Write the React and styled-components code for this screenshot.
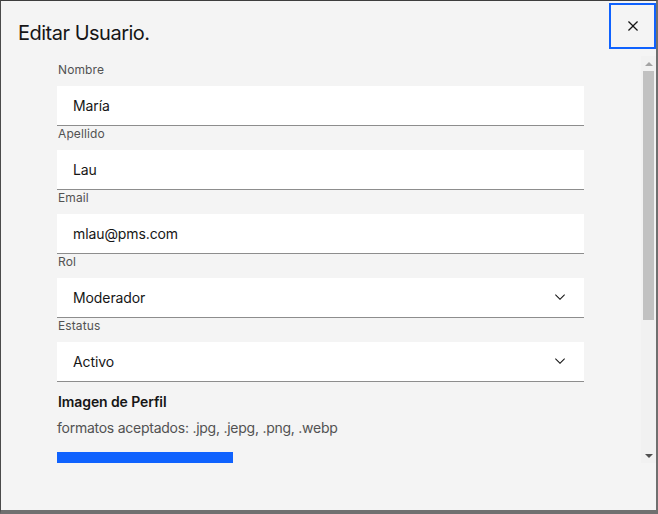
import styled, { createGlobalStyle } from 'styled-components';

const GlobalStyle = createGlobalStyle`
    html, body {
        margin: 0;
        padding: 0;
        background: #3d3d3d;
    }
    * {
        box-sizing: border-box;
    }
`;

const fields = [
    { label: 'Nombre', value: 'María' },
    { label: 'Apellido', value: 'Lau' },
    { label: 'Email', value: 'mlau@pms.com' },
    { label: 'Rol', value: 'Moderador', options: ['Administrador', 'Moderador', 'Usuario'] },
    { label: 'Estatus', value: 'Activo', options: ['Activo', 'Inactivo'] },
];

function ChevronDown() {
    return (
        <svg width="16" height="16" viewBox="0 0 16 16" fill="#161616">
            <path d="M8 11L3 6 3.7 5.3 8 9.6 12.3 5.3 13 6z" />
        </svg>
    );
}

function CloseIcon() {
    return (
        <svg width="20" height="20" viewBox="0 0 32 32" fill="#161616">
            <path d="M17.4141 16L24 9.4141 22.5859 8 16 14.5859 9.4143 8 8 9.4141 14.5859 16 8 22.5859 9.4143 24 16 17.4141 22.5859 24 24 22.5859 17.4141 16z" />
        </svg>
    );
}

function App() {
    return (
        <>
            <GlobalStyle />
            <Modal>
                <Header>
                    <Title>Editar Usuario.</Title>
                    <CloseBt type="button" aria-label="Cerrar">
                        <CloseIcon />
                    </CloseBt>
                </Header>
                <Body>
                    <Content>
                        {fields.map((f) => (
                            <Field key={f.label}>
                                <Label>{f.label}</Label>
                                {f.options ? (
                                    <SelectWrap>
                                        <Select defaultValue={f.value}>
                                            {f.options.map((o) => (
                                                <option key={o}>{o}</option>
                                            ))}
                                        </Select>
                                        <Chevron>
                                            <ChevronDown />
                                        </Chevron>
                                    </SelectWrap>
                                ) : (
                                    <TextInput type="text" defaultValue={f.value} readOnly />
                                )}
                            </Field>
                        ))}
                        <UploadTitle>Imagen de Perfil</UploadTitle>
                        <UploadHint>formatos aceptados: .jpg, .jepg, .png, .webp</UploadHint>
                        {/* boton de subir archivo, queda cortado por el scroll */}
                        <UploadBt type="button" aria-label="Agregar archivo" />
                    </Content>
                    <ScrollBar>
                        <ScrollArrow $up />
                        <ScrollTrack>
                            <ScrollThumb />
                        </ScrollTrack>
                        <ScrollArrow />
                    </ScrollBar>
                </Body>
            </Modal>
        </>
    );
}
export default App;

const Modal = styled.div`
    width: 658px;
    height: 514px;
    background-color: #f4f4f4;
    border-top: 1px solid #3d3d3d;
    border-left: 1px solid #4a4a4a;
    border-right: 2px solid #6f6f6f;
    border-bottom: 4px solid #707070;
    display: flex;
    flex-direction: column;
    font-family: Inter, 'Noto Sans', sans-serif;
    color: #161616;
`;

const Header = styled.div`
    height: 55px;
    display: flex;
    justify-content: space-between;
    align-items: flex-start;
`;

const Title = styled.h2`
    margin: 0;
    padding: 18px 0 0 17px;
    font-size: 20px;
    line-height: 28px;
    font-weight: 400;
    letter-spacing: -0.5px;
`;

const CloseBt = styled.button`
    margin-top: 2px;
    width: 47px;
    height: 46px;
    border: 2px solid #0f62fe;
    background: transparent;
    display: flex;
    justify-content: center;
    align-items: center;
    padding: 0;
    cursor: pointer;
`;

const Body = styled.div`
    height: 407px;
    display: flex;
`;

const Content = styled.div`
    flex: 1;
    overflow: hidden;
    padding: 6px 57px 0 56px;
`;

const Field = styled.div`
    display: flex;
    flex-direction: column;
`;

const Label = styled.label`
    font-size: 12px;
    line-height: 16px;
    color: #525252;
    margin-bottom: 8px;
    padding-left: 1px;
    letter-spacing: 0.1px;
`;

const TextInput = styled.input`
    width: 100%;
    height: 40px;
    border: 0;
    border-bottom: 1px solid #8d8d8d;
    background-color: #ffffff;
    padding: 0 16px;
    font-family: inherit;
    font-size: 14px;
    letter-spacing: -0.1px;
    color: #161616;
    &:focus {
        outline: none;
    }
`;

const SelectWrap = styled.div`
    position: relative;
    width: 100%;
`;

const Select = styled.select`
    width: 100%;
    height: 40px;
    border: 0;
    border-radius: 0;
    border-bottom: 1px solid #8d8d8d;
    background-color: #ffffff;
    padding: 0 48px 0 16px;
    font-family: inherit;
    font-size: 14px;
    letter-spacing: -0.1px;
    color: #161616;
    appearance: none;
    &:focus {
        outline: none;
    }
`;

const Chevron = styled.span`
    position: absolute;
    right: 16px;
    top: 11px;
    display: flex;
    pointer-events: none;
`;

const UploadTitle = styled.p`
    margin: 11px 0 0 1px;
    font-size: 14px;
    line-height: 18px;
    font-weight: 600;
    letter-spacing: -0.1px;
`;

const UploadHint = styled.p`
    margin: 8px 0 0 0;
    font-size: 14px;
    line-height: 18px;
    letter-spacing: -0.25px;
    color: #525252;
`;

const UploadBt = styled.button`
    display: block;
    margin-top: 15px;
    width: 176px;
    height: 48px;
    border: 0;
    background-color: #0f62fe;
`;

const ScrollBar = styled.div`
    width: 15px;
    display: flex;
    flex-direction: column;
    background-color: #f1f1f1;
`;

const ScrollArrow = styled.div`
    height: 15px;
    display: flex;
    justify-content: center;
    align-items: center;
    &::before {
        content: '';
        width: 0;
        height: 0;
        border-left: 4px solid transparent;
        border-right: 4px solid transparent;
        ${(p) => (p.$up ? 'border-bottom: 4px solid #a3a3a3;' : 'border-top: 4px solid #505050;')}
    }
`;

const ScrollTrack = styled.div`
    flex: 1;
    padding: 0 2px;
`;

const ScrollThumb = styled.div`
    height: 249px;
    background-color: #c1c1c1;
`;
